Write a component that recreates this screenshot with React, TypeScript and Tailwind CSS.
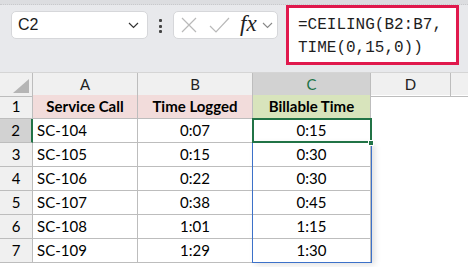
import React from "react";

const rows = [
  ["SC-104", "0:07", "0:15"],
  ["SC-105", "0:15", "0:30"],
  ["SC-106", "0:22", "0:30"],
  ["SC-107", "0:38", "0:45"],
  ["SC-108", "1:01", "1:15"],
  ["SC-109", "1:29", "1:30"],
];

const cols = "grid grid-cols-[33px_105px_115px_118px_80px_1fr]";
const cell = "h-[24px] border-r border-b border-[#bdbdbd] flex items-center text-[15px] text-black";

function FormulaBar() {
  return (
    <div className="relative h-[72px] bg-[#e8e9ec] flex items-start">
      <div className="absolute left-0 right-0 top-0 h-[5px] bg-[#dcdde0] border-b border-dotted border-[#c8c9cc]" />
      <div className="mt-[11px] ml-[11px] w-[137px] h-[28px] rounded-[5px] bg-white border border-[#d6d7da] flex items-center justify-between pl-[6px] pr-[8px]">
        <span className="text-[16px] text-[#1a1a1a] font-['Liberation_Sans',sans-serif]">C2</span>
        <svg width="11" height="7" viewBox="0 0 11 7">
          <path d="M1 1l4.5 4.5L10 1" fill="none" stroke="#333" strokeWidth="1.2" />
        </svg>
      </div>
      <div className="mt-[19px] ml-[11px] flex flex-col gap-[2.5px]">
        <span className="w-[3px] h-[3px] bg-[#444] rounded-[1px]" />
        <span className="w-[3px] h-[3px] bg-[#444] rounded-[1px]" />
        <span className="w-[3px] h-[3px] bg-[#444] rounded-[1px]" />
      </div>
      <div className="mt-[11px] ml-[11px] w-[105px] h-[28px] rounded-[5px] bg-white border border-[#d6d7da] flex items-center pl-[7px]">
        <svg width="16" height="16" viewBox="0 0 16 16">
          <path d="M1 1l14 14M15 1L1 15" fill="none" stroke="#b9b9b9" strokeWidth="1.2" />
        </svg>
        <svg width="21" height="16" viewBox="0 0 21 16" className="ml-[12px]">
          <path d="M1 9l6 6L20 1" fill="none" stroke="#b9b9b9" strokeWidth="1.2" />
        </svg>
        <span className="ml-[10px] text-[23px] italic text-[#222] font-['Liberation_Serif',serif] leading-none -mt-[3px]">
          fx
        </span>
        <svg width="11" height="7" viewBox="0 0 11 7" className="ml-[5px]">
          <path d="M1 1l4.5 4.5L10 1" fill="none" stroke="#888" strokeWidth="1.1" />
        </svg>
      </div>
      <div className="mt-[5px] ml-[8px] w-[173px] h-[60px] bg-white border-[3px] border-[#e0194d] pl-[9px] pt-[6px] font-['Liberation_Mono',monospace] text-[16px] leading-[23px] text-[#1e1e1e]">
        <div>=CEILING(B2:B7,</div>
        <div>TIME(0,15,0))</div>
      </div>
    </div>
  );
}

export default function App() {
  return (
    <div className="w-[468px] h-[267px] overflow-hidden bg-white font-['Lato','Liberation_Sans',sans-serif]">
      <FormulaBar />
      <div className="relative">
        <div className={`${cols} h-[23px] bg-[#f0f0f0] border-t border-[#d5d5d5]`}>
          <div className="relative border-r border-b border-[#bdbdbd]">
            <svg width="16" height="14" viewBox="0 0 16 14" className="absolute right-[3px] bottom-[3px]">
              <path d="M16 0V14H0Z" fill="#b5b5b5" />
            </svg>
          </div>
          <div className="border-r border-b border-[#bdbdbd] flex items-center justify-center text-[15px] text-[#222]">A</div>
          <div className="border-r border-b border-[#bdbdbd] flex items-center justify-center text-[15px] text-[#222]">B</div>
          <div className="border-r border-b border-[#bdbdbd] bg-[#d2d2d2] flex items-center justify-center text-[15px] text-[#217346]">C</div>
          <div className="border-r border-b border-[#bdbdbd] flex items-center justify-center text-[15px] text-[#222]">D</div>
          <div className="border-b border-[#bdbdbd]" />
        </div>
        <div className={cols}>
          <div className={`${cell} justify-center bg-[#f0f0f0] text-[#333]`}>1</div>
          <div className={`${cell} justify-center bg-[#f2dcdb] font-bold`}>Service Call</div>
          <div className={`${cell} justify-center bg-[#f2dcdb] font-bold`}>Time Logged</div>
          <div className={`${cell} justify-center bg-[#d8e4bc] font-bold`}>Billable Time</div>
          <div className="h-[24px]" />
          <div className="h-[24px]" />
        </div>
        {rows.map((r, i) => (
          <div key={r[0]} className={cols}>
            <div
              className={`${cell} justify-center ${
                i === 0 ? "bg-[#d2d2d2] text-[#444] border-r-2 border-r-[#217346]" : "bg-[#f0f0f0] text-[#333]"
              }`}
            >
              {i + 2}
            </div>
            <div className={`${cell} pl-[4px]`}>{r[0]}</div>
            <div className={`${cell} justify-center`}>{r[1]}</div>
            <div className={`${cell} justify-center`}>{r[2]}</div>
            <div className="h-[24px]" />
            <div className="h-[24px]" />
          </div>
        ))}
        <div className="absolute left-[252px] top-[70px] w-[120px] h-[121px] border border-[#3c71c9] shadow-[3px_2px_6px_rgba(0,0,0,0.12)]" />
        <div className="absolute left-[252px] top-[46px] w-[120px] h-[25px] border-2 border-[#217346]" />
        <div className="absolute left-[368px] top-[68px] w-[6px] h-[6px] bg-[#217346] border border-white" />
      </div>
    </div>
  );
}
